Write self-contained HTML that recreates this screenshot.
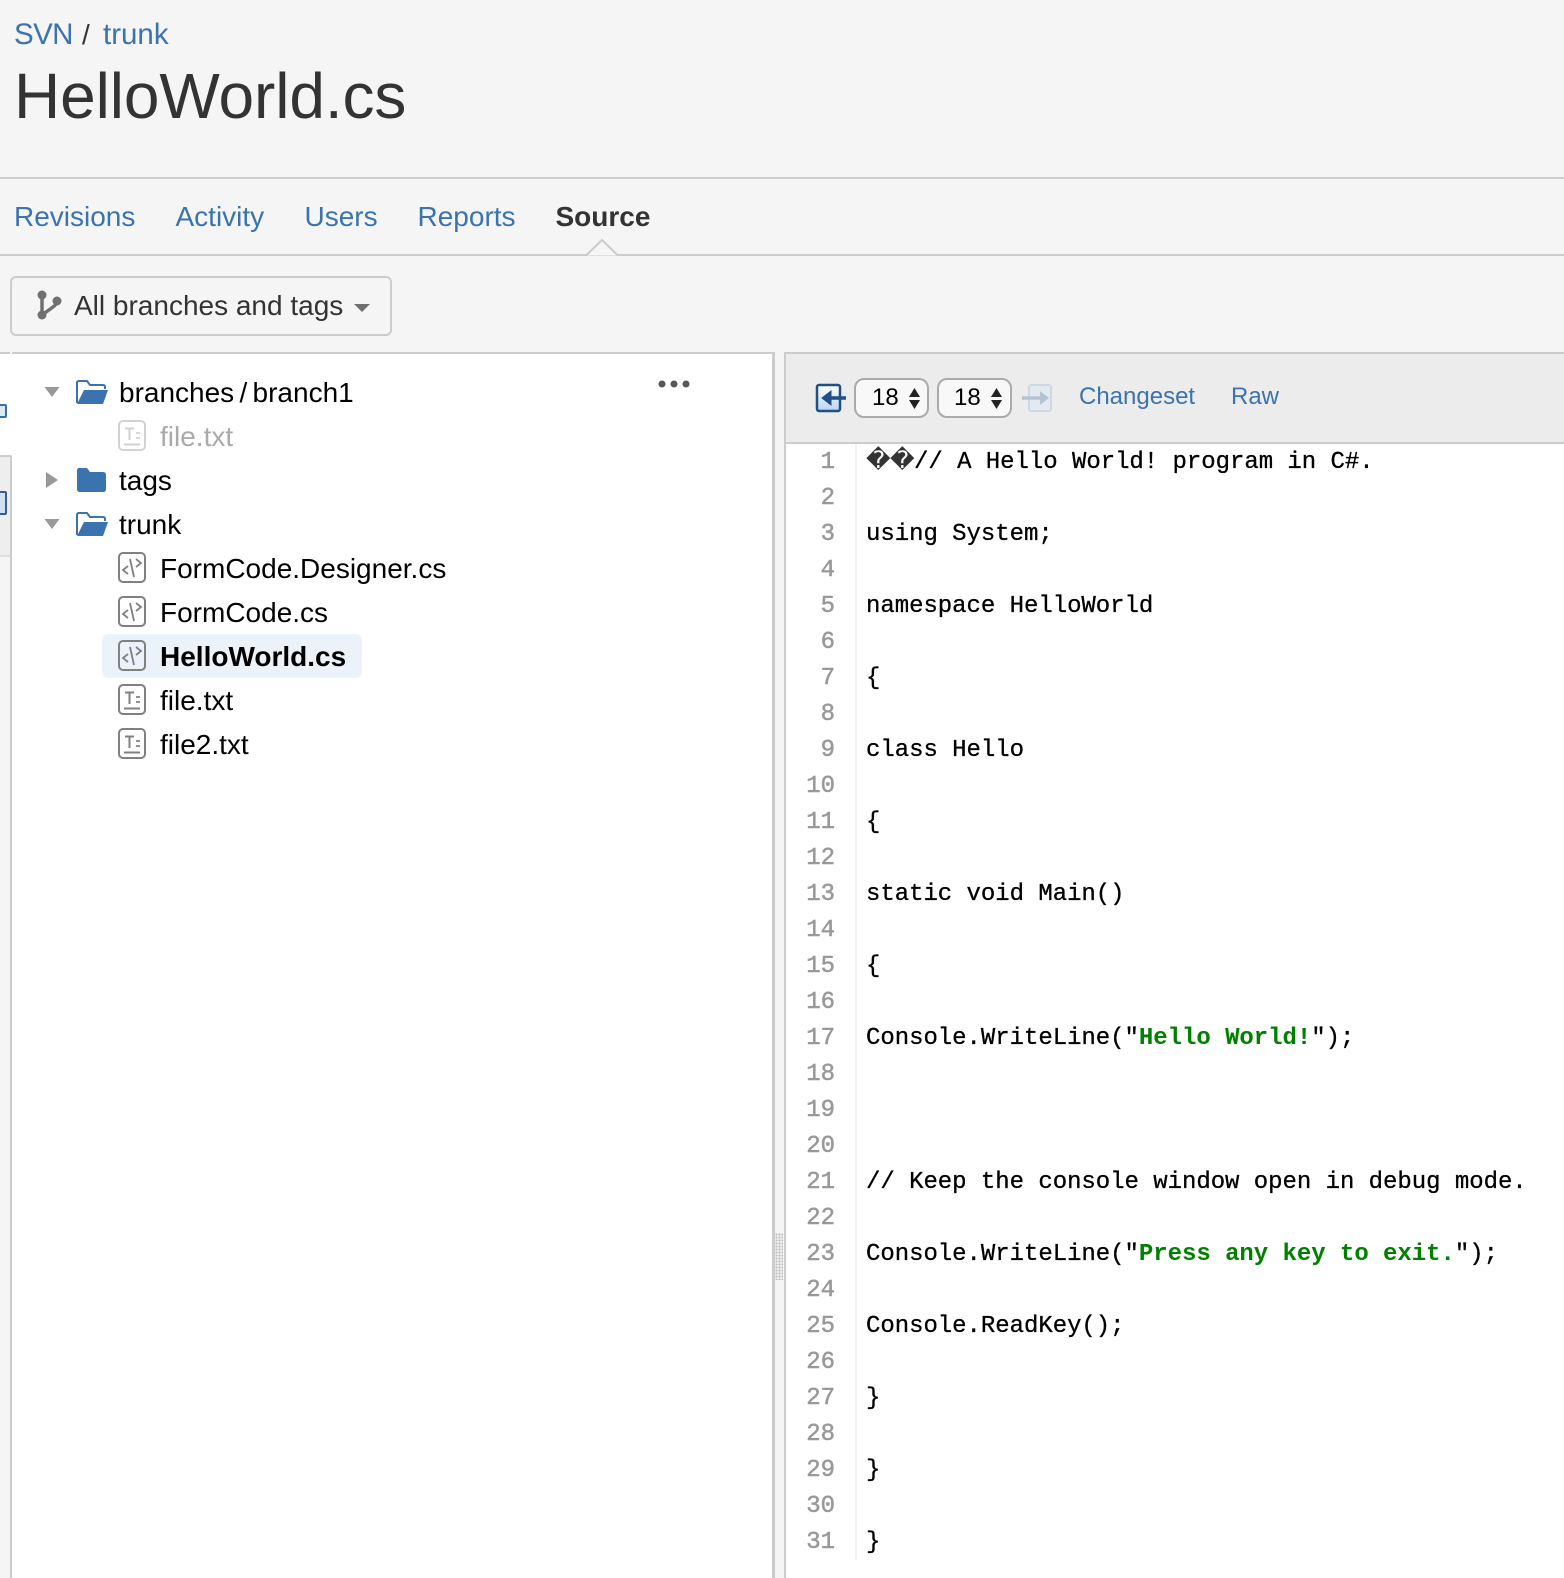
<!DOCTYPE html>
<html><head><meta charset="utf-8"><style>
html,body{margin:0;padding:0}
body{width:1564px;height:1578px;position:relative;overflow:hidden;background:#f5f5f5;font-family:"Liberation Sans",Arial,sans-serif;color:#333}
.a{position:absolute;white-space:pre}
.t{font-size:28px;line-height:40px;position:absolute;white-space:pre}
.l{color:#3b73af}
.k{color:#000}
.b{position:absolute}
.n{position:absolute;left:790px;width:45px;text-align:right;font:24px/36px "Liberation Mono",monospace;color:#999;-webkit-text-stroke:.5px #999}
.c{position:absolute;left:866px;font:24px/36px "Liberation Mono",monospace;color:#000;white-space:pre;letter-spacing:-.04px;-webkit-text-stroke:.3px #000}
.c b{color:#008000;-webkit-text-stroke:0}
.c i{font:24px/36px "DejaVu Sans",sans-serif;display:inline-block;width:24px;text-align:center;color:#333;-webkit-text-stroke:0}
svg{position:absolute;overflow:visible}
</style></head><body>

<div class="t l" style="left:14px;top:15px;font-size:29.500px;letter-spacing:-.6px">SVN</div>
<div class="t" style="left:82px;top:15px">/</div>
<div class="t l" style="left:103px;top:15px;font-size:29.500px">trunk</div>
<div class="a" style="left:14px;top:56px;font-size:64px;line-height:80px;letter-spacing:-.1px">HelloWorld.cs</div>

<div class="b" style="left:0;top:177px;width:1564px;height:2px;background:#ccc"></div>
<div class="t l" style="left:14px;top:197px">Revisions</div>
<div class="t l" style="left:175.500px;top:197px">Activity</div>
<div class="t l" style="left:304.500px;top:197px">Users</div>
<div class="t l" style="left:417.500px;top:197px">Reports</div>
<div class="t" style="left:555.500px;top:197px;font-weight:bold">Source</div>
<div class="b" style="left:0;top:254px;width:1564px;height:2px;background:#ccc"></div>
<svg style="left:0;top:0" width="1" height="1"><path d="M586 255.500L602 240L618 255.500" fill="#f5f5f5" stroke="#ccc" stroke-width="2"/></svg>

<div class="b" style="left:10px;top:276px;width:378px;height:56px;border:2px solid #ccc;border-radius:6px"></div>
<svg style="left:0;top:0" width="1" height="1"><g fill="#707070" stroke="#707070"><circle cx="42" cy="295" r="4.500" stroke="none"/><circle cx="57" cy="301" r="4.500" stroke="none"/><circle cx="42" cy="315" r="4.500" stroke="none"/><path d="M42 295V315M42 315L53 307Q57 304 57 301" fill="none" stroke-width="3.500"/></g><path d="M354 304H370L362 312Z" fill="#707070"/></svg>
<div class="t" style="left:74px;top:286px">All branches and tags</div>

<!-- left edge -->
<div class="b" style="left:0;top:354px;width:12px;height:101px;background:#fff"></div>
<div class="b" style="left:0;top:352px;width:10px;height:2px;background:#ccc"></div>
<div class="b" style="left:0;top:455px;width:10px;height:102px;background:#eee;border-top:2px solid #ccc;border-bottom:2px solid #ddd;box-sizing:border-box"></div>
<div class="b" style="left:10px;top:455px;width:2px;height:1123px;background:#ccc;border-top-right-radius:2px"></div>
<div class="b" style="left:-4px;top:404px;width:7px;height:10px;border:2px solid #3b6ea5;border-radius:2px;background:#dbe8f5"></div>
<div class="b" style="left:-3px;top:491px;width:6px;height:20px;border:2px solid #2f5f94;border-radius:2px;background:#cfe0f2"></div>

<!-- tree panel -->
<div class="b" style="left:12px;top:354px;width:760px;height:1224px;background:#fff"></div>
<div class="b" style="left:12px;top:352px;width:760px;height:2px;background:#ccc"></div>
<div class="b" style="left:772px;top:352px;width:3px;height:1226px;background:#ccc"></div>
<div class="b" style="left:102px;top:634px;width:260px;height:44px;background:#ebf2fa;border-radius:6px"></div>

<svg style="left:0;top:0" width="1" height="1">
<defs>
<g id="fo"><path d="M1 23V3Q1 1 3 1H11L14 5H27Q29 5 29 7V9" fill="none" stroke="#3b73af" stroke-width="2"/><path d="M1 24L8 10H32L27 24Z" fill="#3b73af"/></g>
<g id="fc" fill="none"><rect x="1" y="1" width="26" height="29" rx="4" stroke="#808080" stroke-width="2"/><path d="M10 14L5 18L10 22" stroke="#808080" stroke-width="1.800"/><path d="M12 7L16 25" stroke="#808080" stroke-width="1.800"/><path d="M18 7L23 11L18 15" stroke="#808080" stroke-width="1.800"/></g>
<g id="ft" fill="none" stroke="#808080"><rect x="1" y="1" width="26" height="29" rx="4" stroke-width="2"/><path d="M7 8.500H16M11.500 8.500V20" stroke-width="2"/><path d="M18 13H22M18 18H22" stroke-width="1.800"/><path d="M6 24.500H22" stroke-width="2"/></g>
</defs>
<path d="M44.500 387H59.500L52 397Z" fill="#999"/>
<path d="M46 472L58 480L46 488Z" fill="#999"/>
<path d="M44.500 519H59.500L52 529Z" fill="#999"/>
<use href="#fo" x="76" y="380"/>
<use href="#fo" x="76" y="512"/>
<path d="M77 471Q77 468 79 468H87L90 472H103Q106 472 106 475V489Q106 492 103 492H80Q77 492 77 489Z" fill="#3b73af"/>
<use href="#ft" x="118" y="420" opacity=".35"/>
<use href="#fc" x="118" y="552"/>
<use href="#fc" x="118" y="596"/>
<use href="#fc" x="118" y="640"/>
<use href="#ft" x="118" y="684"/>
<use href="#ft" x="118" y="728"/>
<circle cx="662" cy="384" r="3.500" fill="#555"/><circle cx="674" cy="384" r="3.500" fill="#555"/><circle cx="686" cy="384" r="3.500" fill="#555"/>
</svg>
<div class="t k" style="left:119px;top:373px;word-spacing:-2.500px">branches / branch1</div>
<div class="t" style="left:160px;top:417px;color:#aaa">file.txt</div>
<div class="t k" style="left:119px;top:461px">tags</div>
<div class="t k" style="left:119px;top:505px">trunk</div>
<div class="t k" style="left:160px;top:549px">FormCode.Designer.cs</div>
<div class="t k" style="left:160px;top:593px">FormCode.cs</div>
<div class="t k" style="left:160px;top:637px;font-weight:bold">HelloWorld.cs</div>
<div class="t k" style="left:160px;top:681px">file.txt</div>
<div class="t k" style="left:160px;top:725px">file2.txt</div>

<!-- grip -->
<div class="b" style="left:775px;top:1233px;width:8px;height:47px;background-image:radial-gradient(#bbb 1px,transparent 1.200px);background-size:3px 3px"></div>

<!-- source panel -->
<div class="b" style="left:784px;top:352px;width:780px;height:1226px;background:#fff;border-left:2px solid #ccc;box-sizing:border-box"></div>
<div class="b" style="left:784px;top:352px;width:780px;height:92px;background:#ececec;border-top:2px solid #ccc;border-left:2px solid #ccc;border-bottom:2px solid #ccc;box-sizing:border-box"></div>

<svg style="left:0;top:0" width="1" height="1">
<defs><linearGradient id="g1" x1="0" y1="0" x2="0" y2="1"><stop offset="0" stop-color="#fff"/><stop offset="1" stop-color="#b9d5f2"/></linearGradient></defs>
<rect x="817" y="385" width="23" height="26" rx="2" fill="url(#g1)" stroke="#1f4f85" stroke-width="2.500"/>
<path d="M846 398H825" fill="none" stroke="#1f4f85" stroke-width="3.500"/>
<path d="M831 391L822 398L831 405Z" fill="#1f4f85" stroke="#1f4f85" stroke-width="1"/>
<rect x="1029" y="385" width="22" height="26" rx="2" fill="#e3e9f0" stroke="#ccd8e4" stroke-width="2"/>
<path d="M1022 398H1042" fill="none" stroke="#b4c4d4" stroke-width="3.500"/>
<path d="M1040 391L1049 398L1040 405Z" fill="#b4c4d4"/>
</svg>
<div class="b" style="left:854px;top:378px;width:71px;height:36px;border:2px solid #aaa;border-radius:10px;background:#f8f8f8"></div>
<div class="b" style="left:937px;top:378px;width:71px;height:36px;border:2px solid #aaa;border-radius:10px;background:#f8f8f8"></div>
<svg style="left:0;top:0" width="1" height="1">
<path d="M909 397L914.500 388L920 397ZM909 400H920L914.500 409Z" fill="#222"/>
<path d="M991 397L996.500 388L1002 397ZM991 400H1002L996.500 409Z" fill="#222"/>
</svg>
<div class="a k" style="left:872px;top:383px;font-size:24px;line-height:30px">18</div>
<div class="a k" style="left:954px;top:383px;font-size:24px;line-height:30px">18</div>
<div class="a l" style="left:1079px;top:382px;font-size:24px;line-height:30px">Changeset</div>
<div class="a l" style="left:1231px;top:382px;font-size:24px;line-height:30px">Raw</div>

<div class="b" style="left:855px;top:444px;width:2px;height:1116px;background:#f0f0f0"></div>

<div class="n" style="top:445px">1</div>
<div class="n" style="top:481px">2</div>
<div class="n" style="top:517px">3</div>
<div class="n" style="top:553px">4</div>
<div class="n" style="top:589px">5</div>
<div class="n" style="top:625px">6</div>
<div class="n" style="top:661px">7</div>
<div class="n" style="top:697px">8</div>
<div class="n" style="top:733px">9</div>
<div class="n" style="top:769px">10</div>
<div class="n" style="top:805px">11</div>
<div class="n" style="top:841px">12</div>
<div class="n" style="top:877px">13</div>
<div class="n" style="top:913px">14</div>
<div class="n" style="top:949px">15</div>
<div class="n" style="top:985px">16</div>
<div class="n" style="top:1021px">17</div>
<div class="n" style="top:1057px">18</div>
<div class="n" style="top:1093px">19</div>
<div class="n" style="top:1129px">20</div>
<div class="n" style="top:1165px">21</div>
<div class="n" style="top:1201px">22</div>
<div class="n" style="top:1237px">23</div>
<div class="n" style="top:1273px">24</div>
<div class="n" style="top:1309px">25</div>
<div class="n" style="top:1345px">26</div>
<div class="n" style="top:1381px">27</div>
<div class="n" style="top:1417px">28</div>
<div class="n" style="top:1453px">29</div>
<div class="n" style="top:1489px">30</div>
<div class="n" style="top:1525px">31</div>

<div class="c" style="top:442px"><i>�</i><i>�</i>// A Hello World! program in C#.</div>
<div class="c" style="top:517px">using System;</div>
<div class="c" style="top:589px">namespace HelloWorld</div>
<div class="c" style="top:661px">{</div>
<div class="c" style="top:733px">class Hello</div>
<div class="c" style="top:805px">{</div>
<div class="c" style="top:877px">static void Main()</div>
<div class="c" style="top:949px">{</div>
<div class="c" style="top:1021px">Console.WriteLine("<b>Hello World!</b>");</div>
<div class="c" style="top:1165px">// Keep the console window open in debug mode.</div>
<div class="c" style="top:1237px">Console.WriteLine("<b>Press any key to exit.</b>");</div>
<div class="c" style="top:1309px">Console.ReadKey();</div>
<div class="c" style="top:1381px">}</div>
<div class="c" style="top:1453px">}</div>
<div class="c" style="top:1525px">}</div>
</body></html>
